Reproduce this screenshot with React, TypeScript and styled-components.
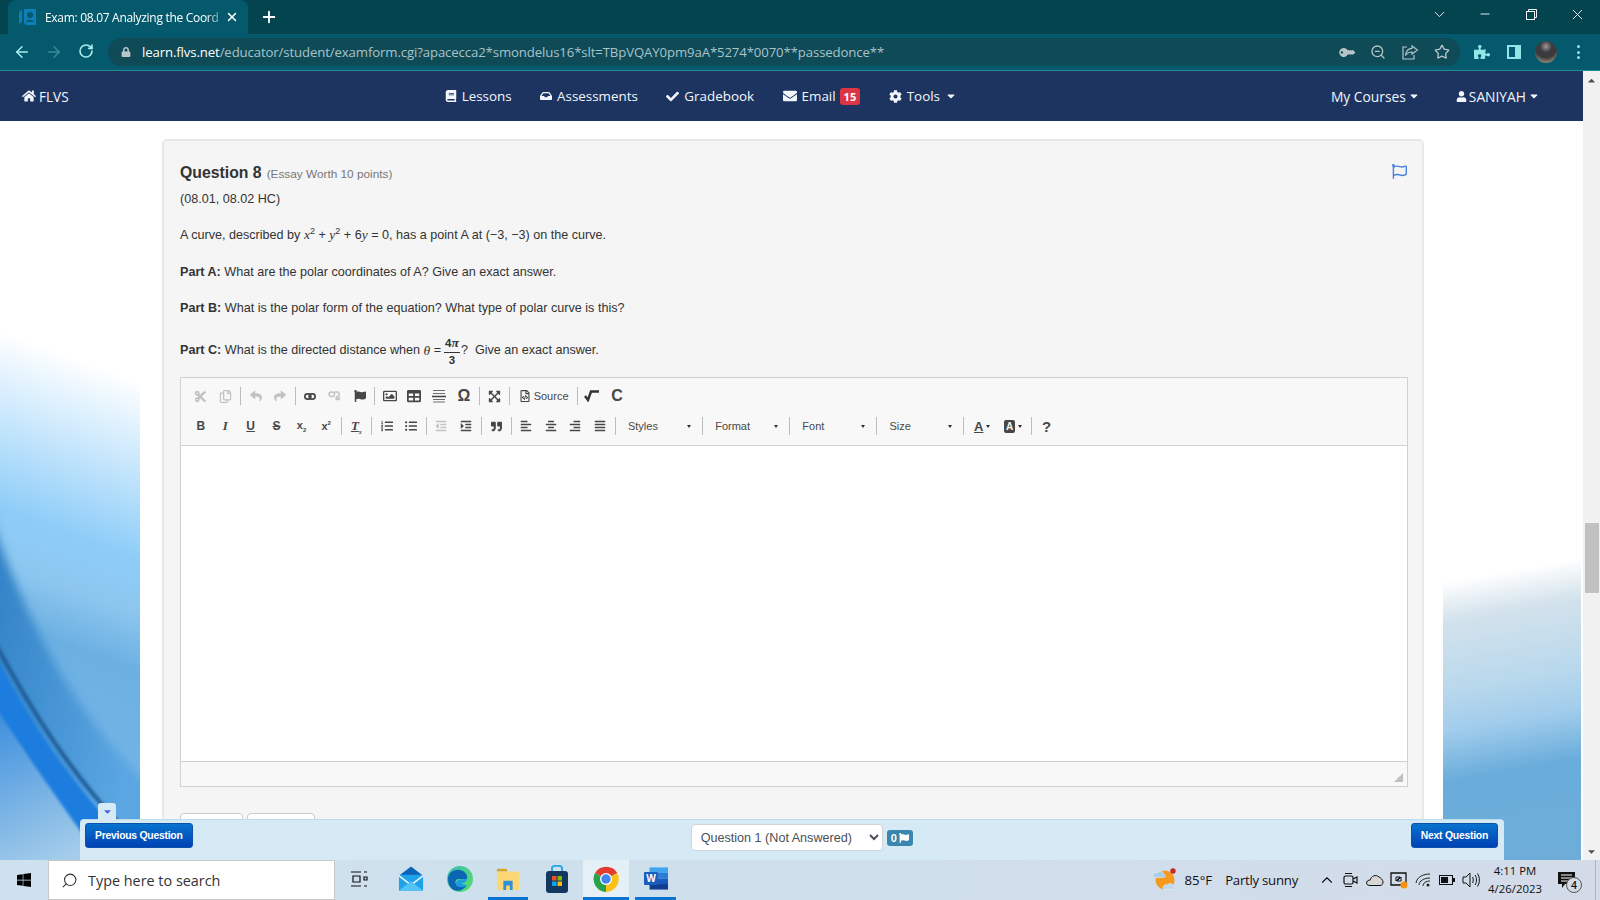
import React from 'react'
import styled, { createGlobalStyle } from 'styled-components'
import {
  FaHome, FaBook, FaInbox, FaCheck, FaEnvelope, FaCog, FaUser, FaRegFlag, FaFlag, FaCut, FaRegCopy,
  FaReply, FaShare, FaRegImage, FaTable, FaExpandArrowsAlt, FaRegFileCode,
  FaQuoteRight, FaAlignLeft, FaAlignCenter, FaAlignRight, FaAlignJustify, FaListOl, FaListUl,
  FaOutdent, FaIndent, FaWindows, FaPuzzlePiece, FaKey, FaCaretDown, FaCaretUp, FaLock
} from 'react-icons/fa'
import { ArrowLeft, ArrowRight, RotateCw, Minus, X, Plus, ChevronDown, ChevronUp, ZoomOut, Star, Search } from 'lucide-react'

const GlobalStyle = createGlobalStyle`
  html, body { margin: 0; padding: 0; height: 100%; overflow: hidden; }
  #root { width: 1600px; height: 900px; }
  * { box-sizing: border-box; }
`

const Screen = styled.div`
  position: relative;
  width: 1600px;
  height: 900px;
  display: flex;
  flex-direction: column;
  overflow: hidden;
  background: #fff;
`

/* browser chrome */
const TabStrip = styled.div`
  height: 34px;
  background: #03444f;
  display: flex;
  align-items: flex-end;
  padding-left: 8px;
  color: #fff;
`
const Tab = styled.div`
  width: 240px;
  height: 34px;
  background: #045a6c;
  border-radius: 8px 8px 0 0;
  display: flex;
  align-items: center;
  padding-left: 11px;
  font: 12px "Open Sans", sans-serif;
`
const TabTitle = styled.span`
  width: 176px;
  margin-left: 8px;
  white-space: nowrap;
  letter-spacing: -0.3px;
  -webkit-mask-image: linear-gradient(90deg, #000 92%, rgba(0, 0, 0, 0.3));
  mask-image: linear-gradient(90deg, #000 92%, rgba(0, 0, 0, 0.3));
`
const TabClose = styled.span`
  display: flex;
  margin-left: 4px;
`
const NewTab = styled.span`
  display: flex;
  margin-left: 12px;
  align-self: center;
`
const WindowControls = styled.div`
  margin-left: auto;
  align-self: flex-start;
  display: flex;
`
const WindowButton = styled.span`
  width: 46px;
  height: 28px;
  display: flex;
  align-items: center;
  justify-content: center;
  color: #f2f7f8;
`
const AddressRow = styled.div`
  height: 37px;
  background: #045a6c;
  border-bottom: 1px solid #1f8c92;
  display: flex;
  align-items: center;
`
const NavArrow = styled.span<{ $dim?: boolean }>`
  width: 32px;
  display: flex;
  justify-content: center;
  color: ${p => (p.$dim ? '#3d8a96' : '#a9ecef')};
`
const ArrowGroup = styled.div`
  display: flex;
  padding-left: 6px;
  width: 108px;
`
const AddressBar = styled.div`
  width: 1352px;
  height: 28px;
  border-radius: 14px;
  background: #0f4a57;
  display: flex;
  align-items: center;
  padding-left: 13px;
  font: 13.2px "Open Sans", sans-serif;
  color: #a9c3c9;
  white-space: nowrap;
`
const UrlHost = styled.span`
  color: #fff;
`
const UrlText = styled.span`
  margin-left: 11px;
  letter-spacing: -0.12px;
`
const AddressIcons = styled.div`
  margin-left: auto;
  display: flex;
  color: #b6c4c8;
  padding-right: 2px;
`
const AddressIcon = styled.span`
  width: 32px;
  display: flex;
  justify-content: center;
  align-items: center;
`
const ToolbarRight = styled.div`
  display: flex;
  align-items: center;
  color: #8fe6e6;
  padding-left: 6px;
`
const ToolbarIcon = styled.span`
  width: 32px;
  display: flex;
  justify-content: center;
  align-items: center;
`
const Avatar = styled.span`
  width: 22px;
  height: 22px;
  border-radius: 50%;
  background: radial-gradient(circle at 50% 25%, #9a9a9a 0, #3c3c40 30%, #3a3a3c 55%, #b7ac90 95%);
`
const Dots = styled.span`
  display: flex;
  flex-direction: column;
  gap: 2.5px;
  i {
    width: 3px;
    height: 3px;
    border-radius: 50%;
    background: #8fe6e6;
  }
`

/* page */
const Viewport = styled.div`
  flex: 1;
  min-height: 0;
  display: flex;
`
const MainColumn = styled.div`
  width: 1583px;
  display: flex;
  flex-direction: column;
  min-height: 0;
`
const Scrollbar = styled.div`
  width: 17px;
  background: #f1f1f1;
  display: flex;
  flex-direction: column;
  align-items: center;
  color: #505050;
  font-size: 11px;
  padding: 4px 0 0;
`
const ScrollThumb = styled.div`
  width: 14px;
  height: 70px;
  background: #c1c1c1;
  margin-top: 437px;
`
const ScrollDown = styled.span`
  margin-top: auto;
  display: flex;
  padding-bottom: 3px;
`
const NavBar = styled.nav`
  height: 50px;
  background: #1d3461;
  color: #f2f6fb;
  display: flex;
  align-items: center;
  padding: 0 43px 0 22px;
  justify-content: space-between;
  font: 13.4px "Open Sans", sans-serif;
  flex-shrink: 0;
`
const Brand = styled.div`
  display: flex;
  align-items: center;
  gap: 3px;
  font-size: 13.6px;
`
const NavLinks = styled.div`
  display: flex;
  align-items: center;
  gap: 28.5px;
  margin-left: 2px;
`
const NavLink = styled.span`
  display: flex;
  align-items: center;
  gap: 5px;
`
const NavUser = styled.span`
  display: flex;
  align-items: center;
  gap: 2px;
  font-size: 13.8px;
`
const Badge = styled.span`
  background: #dc3545;
  color: #fff;
  font: bold 11px "Open Sans", sans-serif;
  border-radius: 3px;
  padding: 1px 4px;
  margin-left: -1px;
`
const NavRight = styled.div`
  display: flex;
  gap: 36px;
`
const Page = styled.div`
  flex: 1;
  min-height: 0;
  display: flex;
  overflow: hidden;
`
const LeftArt = styled.svg`
  width: 140px;
  height: 739px;
  flex-shrink: 0;
  display: block;
`
const Center = styled.main`
  width: 1303px;
  padding: 18px 19px 0 22px;
  flex-shrink: 0;
`
const RightArt = styled.div`
  width: 138px;
  height: 739px;
  background: linear-gradient(170deg, #fff 0, #fff 60.4%, #d3e2ec 65.6%, #b8d8ec 74.8%, #a2cdec 80%, #6aaddb 86.6%, #6eadd8 100%);
`
const Card = styled.section`
  position: relative;
  height: 760px;
  background: #f5f5f5;
  border: 2px solid #e8e8e8;
  border-radius: 5px;
  padding: 23px 14px 0 16px;
  font: 12.6px/1.4 "Liberation Sans", Arial, sans-serif;
  color: #333;
`
const FlagMark = styled.span`
  position: absolute;
  top: 23px;
  right: 15px;
  color: #4a7fe0;
  display: flex;
`
const QuestionHead = styled.div`
  display: flex;
  align-items: baseline;
  gap: 5px;
  height: 24px;
`
const QuestionTitle = styled.h3`
  margin: 0;
  font: bold 15.8px "Liberation Sans", Arial, sans-serif;
  color: #333;
`
const QuestionWorth = styled.small`
  font-size: 11.8px;
  color: #777;
`
const Para = styled.p<{ $top: number }>`
  margin: ${p => p.$top}px 0 0;
  display: flex;
  align-items: center;
  white-space: pre;
  height: 18px;
`
const Sup = styled.sup`
  font-size: 9px;
  line-height: 0;
`
const MathVar = styled.i`
  font-family: "Liberation Serif", serif;
  font-size: 13.5px;
`
const InlineRow = styled.span`
  display: inline;
`
const Fraction = styled.span`
  display: inline-flex;
  flex-direction: column;
  align-items: center;
  font: bold 11.5px/1.2 "Liberation Sans", Arial, sans-serif;
  margin: 0 1px 0 3px;
`
const FractionTop = styled.span`
  border-bottom: 1px solid #333;
  padding: 0 1px 1px;
`
const FractionBottom = styled.span`
  padding-top: 1px;
`

/* editor */
const Editor = styled.div`
  margin-top: 17px;
  border: 1px solid #d1d1d1;
  height: 410px;
  background: #f8f8f8;
  display: flex;
  flex-direction: column;
`
const EditorToolbar = styled.div`
  height: 68px;
  flex-shrink: 0;
  padding: 3px 0 0 7.5px;
  border-bottom: 1px solid #d1d1d1;
`
const ToolRow = styled.div`
  display: flex;
  align-items: center;
  height: 30px;
  color: #474747;
`
const ToolBtn = styled.span<{ $off?: boolean; $w?: number }>`
  width: ${p => p.$w ?? 24.6}px;
  height: 24px;
  flex-shrink: 0;
  display: flex;
  align-items: center;
  justify-content: center;
  gap: 3px;
  font: 11px "Liberation Sans", Arial, sans-serif;
  opacity: ${p => (p.$off ? 0.3 : 1)};
`
const ToolSep = styled.span`
  width: 5.6px;
  height: 18px;
  flex-shrink: 0;
  display: flex;
  justify-content: center;
  &::after {
    content: '';
    width: 1px;
    background: #bcbcbc;
  }
`
const Glyph = styled.span<{ $size?: number; $italic?: boolean; $under?: boolean; $strike?: boolean; $serif?: boolean }>`
  font: ${p => (p.$italic ? 'italic' : 'normal')} bold ${p => p.$size ?? 12}px ${p => (p.$serif ? '"Liberation Serif", serif' : '"Liberation Sans", Arial, sans-serif')};
  text-decoration: ${p => (p.$under ? 'underline' : p.$strike ? 'line-through' : 'none')};
  color: #474747;
`
const BoxGlyph = styled(Glyph)`
  background: #474747;
  color: #f8f8f8;
  padding: 1px 2px;
  border-radius: 2px;
`
const Sub = styled.span`
  font-size: 6px;
  vertical-align: sub;
`
const Super = styled.span`
  font-size: 6px;
  vertical-align: super;
`
const Combo = styled.span`
  width: 81.6px;
  flex-shrink: 0;
  display: flex;
  align-items: center;
  justify-content: space-between;
  padding: 0 9px 0 10px;
  font: 11px "Liberation Sans", Arial, sans-serif;
  color: #484848;
`
const TinyCaret = styled.span`
  width: 0;
  height: 0;
  border-left: 2.5px solid transparent;
  border-right: 2.5px solid transparent;
  border-top: 3px solid #2f2f2f;
`
const EditArea = styled.div`
  flex: 1;
  background: #fff;
`
const EditorFooter = styled.div`
  height: 25px;
  flex-shrink: 0;
  border-top: 1px solid #d1d1d1;
  display: flex;
  justify-content: flex-end;
  align-items: flex-end;
  padding: 0 4px 4px 0;
`
const ResizeMark = styled.span`
  width: 0;
  height: 0;
  border-left: 9px solid transparent;
  border-bottom: 9px solid #bfbfbf;
`
const ActionRow = styled.div`
  display: flex;
  gap: 4px;
  margin-top: 26px;
`
const GhostBtn = styled.span<{ $w: number }>`
  width: ${p => p.$w}px;
  height: 30px;
  background: #fff;
  border: 1px solid #ccc;
  border-radius: 4px;
`

/* fixed question bar */
const QuestionBar = styled.div`
  position: absolute;
  left: 80px;
  top: 819px;
  width: 1424px;
  height: 41px;
  background: #d6eaf5;
  border-top: 1px solid #bcdcec;
  border-radius: 4px 4px 0 0;
  padding: 3px 6px 0 5px;
  display: flex;
  justify-content: space-between;
  align-items: flex-start;
`
const CollapseTab = styled.span`
  position: absolute;
  left: 18px;
  top: -17px;
  width: 18px;
  height: 17px;
  background: #d6eaf5;
  border-radius: 3px 3px 0 0;
  display: flex;
  align-items: center;
  justify-content: center;
  color: #4a5fe0;
  font-size: 11px;
`
const BlueButton = styled.button`
  height: 25px;
  padding: 0 9px;
  border: 1px solid #0a53a8;
  border-radius: 3px;
  background: linear-gradient(#0873cd, #0041b5);
  color: #fff;
  font: bold 10.4px "Liberation Sans", Arial, sans-serif;
  letter-spacing: -0.25px;
`
const JumpGroup = styled.div`
  display: flex;
  align-items: center;
  gap: 4px;
  margin-top: 1px;
`
const JumpSelect = styled.select`
  width: 192px;
  height: 27px;
  background: #fff;
  border: 1px solid #ced4da;
  border-radius: 4px;
  padding: 0 5px;
  font: 12.6px "Liberation Sans", Arial, sans-serif;
  color: #495057;
`
const FlagCount = styled.span`
  width: 26px;
  height: 16px;
  background: #3b86ad;
  border-radius: 3px;
  color: #fff;
  display: flex;
  align-items: center;
  justify-content: center;
  gap: 2px;
  font: bold 11px "Liberation Sans", Arial, sans-serif;
`

/* windows taskbar */
const Taskbar = styled.footer`
  height: 40px;
  flex-shrink: 0;
  background: linear-gradient(90deg, #cde2ee 0%, #cfdfec 50%, #d3dbe9 100%);
  display: flex;
  align-items: center;
  font: 14px "Open Sans", sans-serif;
  color: #111;
`
const StartBtn = styled.span`
  width: 48px;
  display: flex;
  justify-content: center;
  color: #000;
`
const SearchBox = styled.div`
  width: 287px;
  height: 40px;
  background: #fff;
  border: 1px solid #c8c8c8;
  display: flex;
  align-items: center;
  gap: 10px;
  padding-left: 12px;
  color: #333;
  font-size: 14.4px;
`
const TaskSlot = styled.span<{ $w?: number; $lead?: number; $active?: boolean; $bright?: boolean }>`
  width: ${p => p.$w ?? 48}px;
  height: 40px;
  margin-left: ${p => p.$lead ?? 0}px;
  display: flex;
  align-items: center;
  justify-content: center;
  background: ${p => (p.$bright ? '#e4eff6' : 'transparent')};
  border-bottom: 3px solid ${p => (p.$active ? '#0a74d4' : 'transparent')};
`
const Tray = styled.div`
  margin-left: auto;
  display: flex;
  align-items: center;
`
const Weather = styled.div`
  display: flex;
  align-items: center;
  gap: 9px;
  margin-right: 17px;
  font-size: 13.2px;
`
const WeatherText = styled.span`
  margin-left: 4px;
  letter-spacing: -0.25px;
`
const TrayIcon = styled.span`
  width: 24px;
  display: flex;
  justify-content: center;
  color: #111;
`
const Clock = styled.div`
  width: 64px;
  text-align: center;
  font-size: 11.4px;
  line-height: 18px;
`
const Notify = styled.span`
  position: relative;
  width: 40px;
  margin-right: 8px;
  display: flex;
  justify-content: center;
`
const NotifyCount = styled.span`
  position: absolute;
  right: 5px;
  top: 6px;
  width: 16px;
  height: 16px;
  border-radius: 50%;
  border: 1px solid #555;
  background: #d3dbe9;
  font-size: 10.5px;
  font-weight: 600;
  display: flex;
  align-items: center;
  justify-content: center;
`
const ShowDesktop = styled.span`
  width: 5px;
  height: 40px;
  border-left: 1px solid #a9b5c4;
`
const KeyIcon = styled(FaKey)`
  transform: rotate(-135deg);
`
const MirrorSearch = styled(Search)`
  transform: scaleX(-1);
`

const Favicon = () => (
  <svg width="18" height="16" viewBox="0 0 18 16">
    <path d="M0 3 3 1v12l-3 2z" fill="#0b7fb8" />
    <path d="M5 0h12v16H7l-2-2z" fill="#0b7fb8" />
    <circle cx="11" cy="6" r="3" fill="#045a6c" />
    <path d="M7 13c1-3 7-3 8 0z" fill="#045a6c" />
  </svg>
)

const Restore = () => (
  <svg width="11" height="11" viewBox="0 0 11 11" fill="none" stroke="currentColor">
    <rect x="0.5" y="2.5" width="8" height="8" />
    <path d="M2.5 2.5v-2h8v8h-2" />
  </svg>
)

const ShareIcon = () => (
  <svg width="17" height="16" viewBox="0 0 17 16" fill="none" stroke="currentColor" strokeWidth="1.2">
    <path d="M5 3H1v12h11v-4" />
    <path d="M10 2l5.500 4-5.500 4V8C7 8 5 9 3.500 11.500 4 7 6.500 4.500 10 4.300z" />
  </svg>
)

const PanelIcon = () => (
  <svg width="14" height="14" viewBox="0 0 14 14">
    <path d="M0 0h14v14H0z" fill="currentColor" />
    <path d="M2 2h6v10H2z" fill="#045a6c" />
  </svg>
)

const ChainIcon = () => (
  <svg width="12" height="7" viewBox="0 0 14 8" fill="none" stroke="#474747" strokeWidth="2">
    <rect x="1" y="1" width="7" height="6" rx="3" />
    <rect x="6" y="1" width="7" height="6" rx="3" />
  </svg>
)

const BrokenChainIcon = () => (
  <svg width="13" height="10" viewBox="0 0 14 11" fill="none" stroke="#474747" strokeWidth="1.6">
    <rect x="1" y="1" width="6" height="5" rx="2.500" />
    <path d="M7 1h3c3 0 3 5 0 5H9M8 7l5 3M13 7l-5 3" />
  </svg>
)

const HorizontalRule = () => (
  <svg width="14" height="14" viewBox="0 0 14 14" stroke="#474747">
    <path d="M1 1.500h12M1 4.500h12" strokeWidth="0.8" />
    <path d="M0 7.500h14" strokeWidth="1.6" />
    <path d="M1 10.500h12M1 13h12" strokeWidth="0.8" />
  </svg>
)

const Sqrt = () => (
  <svg width="16" height="12" viewBox="0 0 16 12" fill="none" stroke="#333" strokeWidth="2.4">
    <path d="M1 6l3 4 3-8.500h8" />
  </svg>
)

const MailIcon = () => (
  <svg width="26" height="25" viewBox="0 0 28 26">
    <path d="M14 0 27 10H1z" fill="#0a64b8" />
    <rect x="1" y="9" width="26" height="17" fill="#1fa2ea" />
    <path d="M1 9 14 19 27 9v2L14 21 1 11z" fill="#e9f6fd" />
    <path d="M1 26 14 16 27 26z" fill="#52c3f2" />
  </svg>
)

const EdgeIcon = () => (
  <svg width="26" height="26" viewBox="0 0 26 26">
    <defs>
      <linearGradient id="edgeA" x1="0" y1="0" x2="1" y2="1">
        <stop offset="0" stopColor="#36c2b0" />
        <stop offset="1" stopColor="#5ddc6a" />
      </linearGradient>
    </defs>
    <circle cx="13" cy="13" r="13" fill="url(#edgeA)" />
    <path d="M1 13C1 6 8 3 13 4c5 1 8 5 7 9h-9c-3 0-4 5 0 7 2 1 6 1 9-1-3 5-9 7-13 5C3 22 1 18 1 13z" fill="#0c66b4" />
    <path d="M9 18c0-4 4-5 11-5-1 3-3 4-5 4 0 1 2 2 5 2-3 3-11 3-11-1z" fill="#1b9de2" />
  </svg>
)

const FolderIcon = () => (
  <svg width="24" height="24" viewBox="0 0 26 24">
    <path d="M1 1h10l2 3H1z" fill="#d9a22b" />
    <rect x="1" y="4" width="24" height="20" fill="#fbd775" />
    <path d="M8 14h10v10h-3v-5h-4v5H8z" fill="#2f8fd8" />
  </svg>
)

const StoreIcon = () => (
  <svg width="24" height="28" viewBox="0 0 24 28">
    <path d="M7 7V3c0-3 10-3 10 0v4" fill="none" stroke="#2aa8e6" strokeWidth="2" />
    <rect x="1" y="6" width="22" height="22" rx="3" fill="#14375f" />
    <rect x="7" y="11" width="4.500" height="4.500" fill="#f25022" />
    <rect x="12.500" y="11" width="4.500" height="4.500" fill="#7fba00" />
    <rect x="7" y="16.500" width="4.500" height="4.500" fill="#00a4ef" />
    <rect x="12.500" y="16.500" width="4.500" height="4.500" fill="#ffb900" />
  </svg>
)

const ChromeIcon = () => (
  <svg width="26" height="26" viewBox="0 0 26 26">
    <path d="M13 13 2 7A13 13 0 0 1 24.300 7z" fill="#e33b2e" />
    <path d="M13 13 24.300 7A13 13 0 0 1 13 26z" fill="#fbc116" />
    <path d="M13 13V26A13 13 0 0 1 2 7z" fill="#2aa24a" />
    <circle cx="13" cy="13" r="6" fill="#fff" />
    <circle cx="13" cy="13" r="4.700" fill="#3f84f0" />
  </svg>
)

const WordIcon = () => (
  <svg width="24" height="23" viewBox="0 0 26 24">
    <rect x="6" y="0" width="20" height="6" fill="#41a5ee" />
    <rect x="6" y="6" width="20" height="6" fill="#2b7cd3" />
    <rect x="6" y="12" width="20" height="6" fill="#185abd" />
    <rect x="6" y="18" width="20" height="6" fill="#103f91" />
    <rect x="0" y="5" width="15" height="14" rx="1" fill="#1a5dbd" />
    <text x="7.500" y="16" fontSize="11" fontWeight="700" fill="#fff" textAnchor="middle" fontFamily="Liberation Sans">W</text>
  </svg>
)

const TaskViewIcon = () => (
  <svg width="17" height="16" viewBox="0 0 17 16" fill="none" stroke="#111" strokeWidth="1.200">
    <path d="M0 1h10M0 15h10M2 5h7v6H2z" />
    <path d="M13 1h3M13 6h3v3h-3zM13 15h3" />
  </svg>
)

const WeatherIcon = () => (
  <svg width="24" height="25" viewBox="0 0 24 25">
    <circle cx="13" cy="12" r="9.500" fill="#f59a1c" />
    <circle cx="21" cy="3" r="2.700" fill="#c8281e" />
    <path d="M1 8c0-3 3-4 4.500-3C7 2.500 11 3 11.500 6c2 0 2.500 3.500 0 3.500H2.500C1 9.500 1 8 1 8z" fill="#a9cdea" stroke="#dcecf7" strokeWidth="0.6" />
    <path d="M11 20c0-3 3-4 4.500-3 1.500-2.500 5.500-2 6 1 2 0 2.500 3.500 0 3.500h-9C11 21.500 11 20 11 20z" fill="#bcd9ef" stroke="#e4f0f9" strokeWidth="0.6" />
  </svg>
)

const MeetIcon = () => (
  <svg width="18" height="18" viewBox="0 0 18 18" fill="none" stroke="#111" strokeWidth="1.200">
    <rect x="2" y="5" width="9" height="8" rx="1.500" />
    <path d="M11 8l4-2v6l-4-2M3 2.500h7M3 15.500h7" />
  </svg>
)

const CloudIcon = () => (
  <svg width="18" height="12" viewBox="0 0 18 12">
    <path d="M4 11.500C1 11.500 0 9.500.8 8 1.300 6.500 3 6 4 6.300 5 2 10 0 13 3c2 1 4 3 4 5s-1 3.500-3 3.500z" fill="#d6d6d6" stroke="#111" />
  </svg>
)

const ScreenIcon = () => (
  <svg width="18" height="17" viewBox="0 0 18 17">
    <path d="M1 1h15v12H1z" fill="none" stroke="#111" strokeWidth="1.300" />
    <path d="M6 5h4L6 9zM11 9H7l4-4z" fill="none" stroke="#111" />
    <circle cx="14" cy="13" r="3.500" fill="#f7930e" />
  </svg>
)

const WifiIcon = () => (
  <svg width="16" height="14" viewBox="0 0 16 14" fill="none" stroke="#222" strokeWidth="1">
    <path d="M1 10C2 4 8 1 15 1M4 12c0-4 5-7 11-7M8 13c0-3 3-5 7-5" />
    <circle cx="13" cy="12" r="1.500" fill="#222" stroke="none" />
  </svg>
)

const BatteryIcon = () => (
  <svg width="16" height="10" viewBox="0 0 16 10">
    <rect x="0.500" y="0.500" width="13" height="9" fill="none" stroke="#111" />
    <rect x="2" y="2" width="7" height="6" fill="#111" />
    <rect x="14" y="3" width="2" height="4" fill="#111" />
  </svg>
)

const SpeakerIcon = () => (
  <svg width="18" height="16" viewBox="0 0 18 16" fill="none" stroke="#111" strokeWidth="1">
    <path d="M1 5h3l4-4v14l-4-4H1z" />
    <path d="M10.500 5c1 2 1 4 0 6M13 3c2 3 2 7 0 10M15.500 1.500c2.500 4 2.500 9 0 13" />
  </svg>
)

const ActionCenter = () => (
  <svg width="20" height="18" viewBox="0 0 20 18">
    <path d="M1 1h17v12H8l-3 4v-4H1z" fill="#111" />
    <path d="M4 4h11M4 7h11M4 10h7" stroke="#fff" />
  </svg>
)

const toolRowOne = [
  [<FaCut size={13} />, <FaRegCopy size={13} />],
  [<FaReply size={12} />, <FaShare size={12} />]
]

const combos = ['Styles', 'Format', 'Font', 'Size']

const App = () => {
  return (
    <Screen>
      <GlobalStyle />
      <TabStrip>
        <Tab>
          <Favicon />
          <TabTitle>Exam: 08.07 Analyzing the Coord</TabTitle>
          <TabClose><X size={14} strokeWidth={2.5} /></TabClose>
        </Tab>
        <NewTab><Plus size={18} strokeWidth={2.5} /></NewTab>
        <WindowControls>
          <WindowButton><ChevronDown size={17} strokeWidth={1.3} /></WindowButton>
          <WindowButton><Minus size={14} strokeWidth={1.6} /></WindowButton>
          <WindowButton><Restore /></WindowButton>
          <WindowButton><X size={17} strokeWidth={1.3} /></WindowButton>
        </WindowControls>
      </TabStrip>
      <AddressRow>
        <ArrowGroup>
          <NavArrow><ArrowLeft size={18} strokeWidth={2} /></NavArrow>
          <NavArrow $dim><ArrowRight size={18} strokeWidth={2} /></NavArrow>
          <NavArrow><RotateCw size={16} strokeWidth={2.4} /></NavArrow>
        </ArrowGroup>
        <AddressBar>
          <FaLock size={10} color="#b8c6c9" />
          <UrlText>
            <UrlHost>learn.flvs.net</UrlHost>/educator/student/examform.cgi?apacecca2*smondelus16*slt=TBpVQAY0pm9aA*5274*0070**passedonce**
          </UrlText>
          <AddressIcons>
            <AddressIcon><KeyIcon size={13} /></AddressIcon>
            <AddressIcon><ZoomOut size={16} /></AddressIcon>
            <AddressIcon><ShareIcon /></AddressIcon>
            <AddressIcon><Star size={16} strokeWidth={2} /></AddressIcon>
          </AddressIcons>
        </AddressBar>
        <ToolbarRight>
          <ToolbarIcon><FaPuzzlePiece size={16} /></ToolbarIcon>
          <ToolbarIcon><PanelIcon /></ToolbarIcon>
          <ToolbarIcon><Avatar /></ToolbarIcon>
          <ToolbarIcon><Dots><i /><i /><i /></Dots></ToolbarIcon>
        </ToolbarRight>
      </AddressRow>

      <Viewport>
        <MainColumn>
          <NavBar>
            <Brand><FaHome size={14} /> FLVS</Brand>
            <NavLinks>
              <NavLink><FaBook size={12} /> Lessons</NavLink>
              <NavLink><FaInbox size={12} /> Assessments</NavLink>
              <NavLink><FaCheck size={13} /> Gradebook</NavLink>
              <NavLink><FaEnvelope size={14} /> Email <Badge>15</Badge></NavLink>
              <NavLink><FaCog size={13} /> Tools <FaCaretDown size={12} /></NavLink>
            </NavLinks>
            <NavRight>
              <NavUser>My Courses <FaCaretDown size={12} /></NavUser>
              <NavUser><FaUser size={11} /> SANIYAH <FaCaretDown size={12} /></NavUser>
            </NavRight>
          </NavBar>
          <Page>
            <LeftArt viewBox="0 0 140 739" preserveAspectRatio="none">
              <defs>
                <linearGradient id="sky" gradientUnits="userSpaceOnUse" x1="70" y1="190" x2="-110" y2="680">
                  <stop offset="0" stopColor="#ffffff" />
                  <stop offset="0.08" stopColor="#ffffff" />
                  <stop offset="0.2" stopColor="#d5edfd" />
                  <stop offset="0.4" stopColor="#8ecdf8" />
                  <stop offset="0.5" stopColor="#8cc6ef" />
                  <stop offset="0.6" stopColor="#6cb0e2" />
                  <stop offset="1" stopColor="#7ab8ea" />
                </linearGradient>
                <linearGradient id="ground" x1="0.2" y1="0" x2="0.5" y2="1">
                  <stop offset="0" stopColor="#3d8fdd" />
                  <stop offset="1" stopColor="#a5cdea" />
                </linearGradient>
                <linearGradient id="band" x1="0" y1="0" x2="1" y2="0.4">
                  <stop offset="0" stopColor="#2f7fc4" />
                  <stop offset="1" stopColor="#5aa6e2" />
                </linearGradient>
                <filter id="soft" x="-20%" y="-20%" width="140%" height="140%"><feGaussianBlur stdDeviation="1.5" /></filter>
                <filter id="softer" x="-20%" y="-20%" width="140%" height="140%"><feGaussianBlur stdDeviation="5" /></filter>
              </defs>
              <rect width="140" height="739" fill="url(#sky)" />
              <path d="M-10 395C30 510 80 600 150 665V720L-10 610z" fill="url(#band)" filter="url(#softer)" />
              <path d="M-5 534C30 600 70 660 115 706L150 710V745H-5z" fill="#1a7ddf" filter="url(#soft)" />
              <path d="M-5 585C30 640 70 695 105 745H-5z" fill="url(#ground)" filter="url(#soft)" />
              <path d="M-5 522C30 587 70 652 125 709" fill="none" stroke="#1c5a96" strokeWidth="4" filter="url(#soft)" />
            </LeftArt>
            <Center>
              <Card>
                <FlagMark><FaRegFlag size={15} /></FlagMark>
                <QuestionHead>
                  <QuestionTitle>Question 8</QuestionTitle>
                  <QuestionWorth>(Essay Worth 10 points)</QuestionWorth>
                </QuestionHead>
                <Para $top={3}>(08.01, 08.02 HC)</Para>
                <Para $top={17}>
                  <InlineRow>A curve, described by <MathVar>x</MathVar><Sup>2</Sup> + <MathVar>y</MathVar><Sup>2</Sup> + 6<MathVar>y</MathVar> = 0, has a point A at (−3, −3) on the curve.</InlineRow>
                </Para>
                <Para $top={20}><InlineRow><b>Part A:</b> What are the polar coordinates of A? Give an exact answer.</InlineRow></Para>
                <Para $top={18}><InlineRow><b>Part B:</b> What is the polar form of the equation? What type of polar curve is this?</InlineRow></Para>
                <Para $top={24}>
                  <b>Part C:</b> What is the directed distance when <MathVar>θ</MathVar> =
                  <Fraction><FractionTop>4<MathVar>π</MathVar></FractionTop><FractionBottom>3</FractionBottom></Fraction>
                  {'?  Give an exact answer.'}
                </Para>
                <Editor>
                  <EditorToolbar>
                    <ToolRow>
                      {toolRowOne.map((group, g) => (
                        <React.Fragment key={g}>
                          {group.map((icon, i) => <ToolBtn key={i} $off>{icon}</ToolBtn>)}
                          <ToolSep />
                        </React.Fragment>
                      ))}
                      <ToolBtn><ChainIcon /></ToolBtn>
                      <ToolBtn $off><BrokenChainIcon /></ToolBtn>
                      <ToolBtn><FaFlag size={12} /></ToolBtn>
                      <ToolSep />
                      <ToolBtn><FaRegImage size={14} /></ToolBtn>
                      <ToolBtn><FaTable size={14} /></ToolBtn>
                      <ToolBtn><HorizontalRule /></ToolBtn>
                      <ToolBtn $w={25.6}><Glyph $size={16}>Ω</Glyph></ToolBtn>
                      <ToolSep />
                      <ToolBtn><FaExpandArrowsAlt size={13} /></ToolBtn>
                      <ToolSep />
                      <ToolBtn $w={62}><FaRegFileCode size={12} /> Source</ToolBtn>
                      <ToolSep />
                      <ToolBtn><Sqrt /></ToolBtn>
                      <ToolBtn><Glyph $size={16}>C</Glyph></ToolBtn>
                    </ToolRow>
                    <ToolRow>
                      <ToolBtn><Glyph>B</Glyph></ToolBtn>
                      <ToolBtn><Glyph $italic $serif $size={13}>I</Glyph></ToolBtn>
                      <ToolBtn $w={26}><Glyph $under>U</Glyph></ToolBtn>
                      <ToolBtn $w={25.6}><Glyph $strike>S</Glyph></ToolBtn>
                      <ToolBtn><Glyph $size={11}>x<Sub>2</Sub></Glyph></ToolBtn>
                      <ToolBtn><Glyph $size={11}>x<Super>2</Super></Glyph></ToolBtn>
                      <ToolSep />
                      <ToolBtn><Glyph $italic $serif $under $size={13}>T<Sub>x</Sub></Glyph></ToolBtn>
                      <ToolSep />
                      <ToolBtn><FaListOl size={12} /></ToolBtn>
                      <ToolBtn><FaListUl size={12} /></ToolBtn>
                      <ToolSep />
                      <ToolBtn $off><FaOutdent size={12} /></ToolBtn>
                      <ToolBtn><FaIndent size={12} /></ToolBtn>
                      <ToolSep />
                      <ToolBtn><FaQuoteRight size={11} /></ToolBtn>
                      <ToolSep />
                      <ToolBtn><FaAlignLeft size={12} /></ToolBtn>
                      <ToolBtn><FaAlignCenter size={12} /></ToolBtn>
                      <ToolBtn><FaAlignRight size={12} /></ToolBtn>
                      <ToolBtn><FaAlignJustify size={12} /></ToolBtn>
                      <ToolSep />
                      {combos.map(c => (
                        <React.Fragment key={c}>
                          <Combo>{c}<TinyCaret /></Combo>
                          <ToolSep />
                        </React.Fragment>
                      ))}
                      <ToolBtn $w={31}><Glyph $under $size={13}>A</Glyph><TinyCaret /></ToolBtn>
                      <ToolBtn $w={31}><BoxGlyph $size={10}>A</BoxGlyph><TinyCaret /></ToolBtn>
                      <ToolSep />
                      <ToolBtn><Glyph $size={15}>?</Glyph></ToolBtn>
                    </ToolRow>
                  </EditorToolbar>
                  <EditArea />
                  <EditorFooter><ResizeMark /></EditorFooter>
                </Editor>
                <ActionRow>
                  <GhostBtn $w={63} />
                  <GhostBtn $w={68} />
                </ActionRow>
              </Card>
            </Center>
            <RightArt />
          </Page>
        </MainColumn>
        <Scrollbar>
          <FaCaretUp />
          <ScrollThumb />
          <ScrollDown><FaCaretDown /></ScrollDown>
        </Scrollbar>
      </Viewport>

      <QuestionBar>
        <CollapseTab><FaCaretDown /></CollapseTab>
        <BlueButton>Previous Question</BlueButton>
        <JumpGroup>
          <JumpSelect defaultValue="1">
            <option value="1">Question 1 (Not Answered)</option>
          </JumpSelect>
          <FlagCount>0<FaFlag size={10} /></FlagCount>
        </JumpGroup>
        <BlueButton>Next Question</BlueButton>
      </QuestionBar>

      <Taskbar>
        <StartBtn><FaWindows size={16} /></StartBtn>
        <SearchBox><MirrorSearch size={17} strokeWidth={1.5} /> Type here to search</SearchBox>
        <TaskSlot><TaskViewIcon /></TaskSlot>
        <TaskSlot $lead={4}><MailIcon /></TaskSlot>
        <TaskSlot $lead={1}><EdgeIcon /></TaskSlot>
        <TaskSlot $lead={4} $w={40} $active><FolderIcon /></TaskSlot>
        <TaskSlot $lead={5}><StoreIcon /></TaskSlot>
        <TaskSlot $lead={2} $w={46} $active $bright><ChromeIcon /></TaskSlot>
        <TaskSlot $lead={6} $w={41} $active><WordIcon /></TaskSlot>
        <Tray>
          <Weather><WeatherIcon /> <span>85°F</span> <WeatherText>Partly sunny</WeatherText></Weather>
          <TrayIcon><ChevronUp size={18} strokeWidth={1.5} /></TrayIcon>
          <TrayIcon><MeetIcon /></TrayIcon>
          <TrayIcon><CloudIcon /></TrayIcon>
          <TrayIcon><ScreenIcon /></TrayIcon>
          <TrayIcon><WifiIcon /></TrayIcon>
          <TrayIcon><BatteryIcon /></TrayIcon>
          <TrayIcon><SpeakerIcon /></TrayIcon>
          <Clock>4:11 PM<br />4/26/2023</Clock>
          <Notify><ActionCenter /><NotifyCount>4</NotifyCount></Notify>
          <ShowDesktop />
        </Tray>
      </Taskbar>
    </Screen>
  )
}

export default App
